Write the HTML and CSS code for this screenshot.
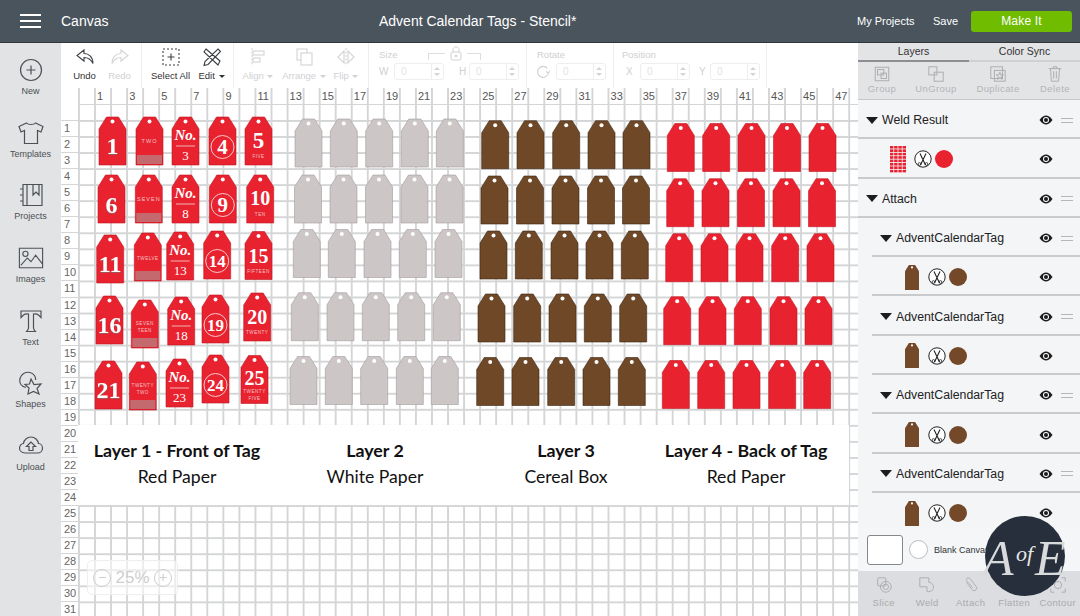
FILE: index.html
```html
<!DOCTYPE html>
<html lang="en">
	<head>
		<meta charset="utf-8">
		<title>Canvas - Advent Calendar Tags</title>
		<link rel="stylesheet" href="styles.css">
	</head>
	<body>
		<svg class="defs" aria-hidden="true">
			<defs>
				<g id="tag">
					<path d="M7.5 0H19.5L27 12V48H0V12Z"/>
					<circle class="hole" cx="13.5" cy="4.5" r="2"/>
				</g>
				<g id="scissors">
					<circle cx="9" cy="9" r="8.2" fill="#fff" stroke="#222" stroke-width="1"/>
					<path d="M6 3.5L11.5 15M12 3.5L6.5 15" fill="none" stroke="#222" stroke-width="1.1"/>
					<circle cx="5.5" cy="14" r="1.4" fill="none" stroke="#222" stroke-width=".8"/>
					<circle cx="12.5" cy="14" r="1.4" fill="none" stroke="#222" stroke-width=".8"/>
				</g>
				<g id="eye">
					<path d="M.5 5C3 1.5 5 .6 7 .6S11 1.5 13.5 5C11 8.5 9 9.4 7 9.4S3 8.5 .5 5Z" fill="#1d1d1d"/>
					<circle cx="7" cy="5" r="3" fill="#fff"/>
					<circle cx="7" cy="5" r="2" fill="#1d1d1d"/>
				</g>
				<pattern id="tiles" width="4.2" height="3.4" patternUnits="userSpaceOnUse">
					<rect width="3.4" height="2.6" fill="#e8222f"/>
				</pattern>
			</defs>
		</svg>

		<div class="app">
			<header class="topbar">
				<div class="burger"><span></span><span></span><span></span></div>
				<div class="brand">Canvas</div>
				<div class="doc-title">Advent Calendar Tags - Stencil*</div>
				<a class="top-link link-projects">My Projects</a>
				<a class="top-link link-save">Save</a>
				<a class="btn-make">Make It</a>
			</header>

			<div class="main">
				<nav class="sidebar">
					<div class="side-item">
						<svg class="side-icon" viewBox="0 0 24 24"><circle cx="12" cy="12" r="10.5"/><path d="M12 7.5v9M7.5 12h9"/></svg>
						<span>New</span>
					</div>
					<div class="side-item">
						<svg class="side-icon" viewBox="0 0 26 24"><path d="M8.5 2C10 4 16 4 17.5 2L25 5.5L23 11L19.5 9.5V22.5H6.5V9.5L3 11L1 5.5Z"/></svg>
						<span>Templates</span>
					</div>
					<div class="side-item">
						<svg class="side-icon" viewBox="0 0 26 24"><path d="M5 1.5H24V22.5H5ZM5 6H2M5 12H2M5 18H2M9 1.5V22.5M15 1.5V12L18 9L21 12V1.5"/></svg>
						<span>Projects</span>
					</div>
					<div class="side-item">
						<svg class="side-icon" viewBox="0 0 28 24"><path d="M1.5 1.5H26.5V22.5H1.5ZM3 20L10 12L14 16L19 9L26 18"/><circle cx="8" cy="7.5" r="2.8"/></svg>
						<span>Images</span>
					</div>
					<div class="side-item">
						<svg class="side-icon" viewBox="0 0 24 24"><path d="M2 2H22V8.5L19.5 6C18 4.8 16 4.8 14.5 5V19C14.5 20.5 15.5 21 16.5 22.5H7.5C8.5 21 9.5 20.5 9.5 19V5C8 4.8 6 4.8 4.5 6L2 8.5Z"/></svg>
						<span>Text</span>
					</div>
					<div class="side-item">
						<svg class="side-icon" viewBox="0 0 26 24"><path d="M8 16.5C3.5 15.5 1 12 2 7.5C3 3 7.5 .5 12 1.5C16 2.5 18 6 17.5 9M13 8L16 13.5L23 13L19 17.5L21 23L15.5 20.5L10 23L11 17L7 13.5L11.5 13Z"/></svg>
						<span>Shapes</span>
					</div>
					<div class="side-item">
						<svg class="side-icon" viewBox="0 0 26 24"><path d="M7 19C3.5 19 1.5 16.5 1.5 14C1.5 11.5 3.5 9.5 5.5 9.5C6 5.5 9.5 3 13 3C17 3 20 6 20.5 9.5C23 9.5 24.5 12 24.5 14.2C24.5 16.8 22.5 19 19.5 19Z"/><path d="M13 8L8.5 12.5H11V16.5H15V12.5H17.5Z"/></svg>
						<span>Upload</span>
					</div>
				</nav>

				<div class="workspace">
					<div class="toolbar">
						<div class="tool-group group-history">
							<div class="tool">
								<svg class="tool-icon" viewBox="0 0 20 16"><path d="M9 1L2 6.5L9 12V8.5C13 8.5 16 10.5 18 14.5C18 8 14 4.5 9 4.5Z"/></svg>
								<span>Undo</span>
							</div>
							<div class="tool is-off">
								<svg class="tool-icon" viewBox="0 0 20 16"><path d="M11 1L18 6.5L11 12V8.5C7 8.5 4 10.5 2 14.5C2 8 6 4.5 11 4.5Z"/></svg>
								<span>Redo</span>
							</div>
						</div>
						<div class="tool-group group-select">
							<div class="tool tool-wide">
								<svg class="tool-icon" viewBox="0 0 20 20"><rect x="2" y="2" width="16" height="16" stroke-dasharray="2 2"/><path d="M10 6.5v7M6.5 10h7"/></svg>
								<span>Select All</span>
							</div>
							<div class="tool tool-wide">
								<svg class="tool-icon" viewBox="0 0 20 20"><path d="M4 2L18 14L16 18L2 5ZM16 2L18.5 4.5L6 17.5L2 18.5L3 14.5Z"/></svg>
								<span>Edit <i class="caret"></i></span>
							</div>
						</div>
						<div class="tool-group group-arrange is-off">
							<div class="tool tool-align">
								<svg class="tool-icon" viewBox="0 0 20 20"><path d="M4 1V19" stroke-dasharray="2 1.5"/><rect x="5" y="4" width="11" height="4"/><rect x="5" y="11" width="7" height="4"/></svg>
								<span>Align <i class="caret"></i></span>
							</div>
							<div class="tool tool-arrange">
								<svg class="tool-icon" viewBox="0 0 20 20"><rect x="3" y="2" width="10" height="11"/><rect x="7" y="6" width="11" height="12" fill="#fff"/></svg>
								<span>Arrange <i class="caret"></i></span>
							</div>
							<div class="tool tool-flip">
								<svg class="tool-icon" viewBox="0 0 20 20"><path d="M10 1V19" stroke-dasharray="2 1.5"/><path d="M8 4L2 10L8 16ZM12 4L18 10L12 16Z"/></svg>
								<span>Flip <i class="caret"></i></span>
							</div>
						</div>
						<div class="tool-group group-size is-off">
							<div class="field-head">
								<span class="field-title">Size</span>
								<i class="bracket"></i>
								<svg class="lock" viewBox="0 0 14 16"><path d="M4 7V4.5C4 1 10 1 10 4.5V7"/><rect x="2" y="7" width="10" height="8" rx="2"/><circle cx="7" cy="11" r="1"/></svg>
								<i class="bracket bracket-right"></i>
							</div>
							<div class="field-row">
								<span class="field-key">W</span>
								<div class="field"><span>0</span><i class="stepper"></i></div>
								<span class="field-key key-h">H</span>
								<div class="field"><span>0</span><i class="stepper"></i></div>
							</div>
						</div>
						<div class="tool-group group-rotate is-off">
							<div class="field-head"><span class="field-title">Rotate</span></div>
							<div class="field-row">
								<svg class="rotate-icon" viewBox="0 0 14 14"><path d="M11.5 3.5A5.5 5.5 0 1 0 12.5 8M12.5 8L10 6.5M12.5 8L14 5.5"/></svg>
								<div class="field"><span>0</span><i class="stepper"></i></div>
							</div>
						</div>
						<div class="tool-group group-position is-off">
							<div class="field-head"><span class="field-title">Position</span></div>
							<div class="field-row">
								<span class="field-key key-x">X</span>
								<div class="field"><span>0</span><i class="stepper"></i></div>
								<span class="field-key key-y">Y</span>
								<div class="field"><span>0</span><i class="stepper"></i></div>
							</div>
						</div>
					</div>

					<div class="canvas">
						<div class="corner"></div>
						<div class="ruler-top">
							<span>1</span><span>3</span><span>5</span><span>7</span><span>9</span><span>11</span><span>13</span><span>15</span><span>17</span><span>19</span><span>21</span><span>23</span>
							<span>25</span><span>27</span><span>29</span><span>31</span><span>33</span><span>35</span><span>37</span><span>39</span><span>41</span><span>43</span><span>45</span><span>47</span>
						</div>
						<div class="ruler-left">
							<span>1</span><span>2</span><span>3</span><span>4</span><span>5</span><span>6</span><span>7</span><span>8</span><span>9</span><span>10</span><span>11</span>
							<span>12</span><span>13</span><span>14</span><span>15</span><span>16</span><span>17</span><span>18</span><span>19</span><span>20</span><span>21</span>
							<span>22</span><span>23</span><span>24</span><span>25</span><span>26</span><span>27</span><span>28</span><span>29</span><span>30</span><span>31</span>
						</div>
						<div class="grid"></div>

						<svg class="tags" viewBox="61 88 797 528">
							<!-- layer 1, front of tag -->
							<g class="red">
								<g transform="translate(99 117)"><use href="#tag"/><text class="big" x="13.5" y="37">1</text></g>
								<g transform="translate(136 117)"><use href="#tag"/><text class="word" x="13.5" y="26">TWO</text><rect class="hatch" x="1" y="38" width="25" height="9"/></g>
								<g transform="translate(172 117)"><use href="#tag"/><text class="no" x="13.5" y="23">No.</text><path class="rule" d="M4 29H23"/><text class="num" x="13.5" y="43">3</text></g>
								<g transform="translate(209 117)"><use href="#tag"/><circle class="ring" cx="13.5" cy="30" r="11.5"/><text class="num-ring solo" x="13.5" y="37">4</text></g>
								<g transform="translate(245 117)"><use href="#tag"/><text class="mid solo" x="13.5" y="31">5</text><text class="word-sm" x="13.5" y="41">FIVE</text></g>

								<g transform="translate(98 175)"><use href="#tag"/><text class="big" x="13.5" y="38">6</text></g>
								<g transform="translate(135.3 175)"><use href="#tag"/><text class="word" x="13.5" y="26">SEVEN</text><rect class="hatch" x="1" y="38" width="25" height="9"/></g>
								<g transform="translate(172 175)"><use href="#tag"/><text class="no" x="13.5" y="23">No.</text><path class="rule" d="M4 29H23"/><text class="num" x="13.5" y="43">8</text></g>
								<g transform="translate(209.3 175)"><use href="#tag"/><circle class="ring" cx="13.5" cy="30" r="11.5"/><text class="num-ring solo" x="13.5" y="37">9</text></g>
								<g transform="translate(246.7 175)"><use href="#tag"/><text class="mid" x="13.5" y="30">10</text><text class="word-sm" x="13.5" y="41">TEN</text></g>

								<g transform="translate(96.7 235)"><use href="#tag"/><text class="big" x="13.5" y="37">11</text></g>
								<g transform="translate(134.3 233)"><use href="#tag"/><text class="word-sm" x="13.5" y="27">TWELVE</text><rect class="hatch" x="1" y="38" width="25" height="9"/></g>
								<g transform="translate(166.7 232)"><use href="#tag"/><text class="no" x="13.5" y="23">No.</text><path class="rule" d="M4 29H23"/><text class="num" x="13.5" y="43">13</text></g>
								<g transform="translate(203.7 231)"><use href="#tag"/><circle class="ring" cx="13.5" cy="30" r="11.5"/><text class="num-ring" x="13.5" y="36">14</text></g>
								<g transform="translate(245 231.5)"><use href="#tag"/><text class="mid" x="13.5" y="31">15</text><text class="word-sm" x="13.5" y="41">FIFTEEN</text></g>

								<g transform="translate(96 296)"><use href="#tag"/><text class="big" x="13.5" y="37">16</text></g>
								<g transform="translate(131.3 300)"><use href="#tag"/><text class="word-sm" x="13.5" y="25">SEVEN</text><text class="word-sm" x="13.5" y="32">TEEN</text><rect class="hatch" x="1" y="38" width="25" height="9"/></g>
								<g transform="translate(167.7 297)"><use href="#tag"/><text class="no" x="13.5" y="23">No.</text><path class="rule" d="M4 29H23"/><text class="num" x="13.5" y="43">18</text></g>
								<g transform="translate(202 295)"><use href="#tag"/><circle class="ring" cx="13.5" cy="30" r="11.5"/><text class="num-ring" x="13.5" y="36">19</text></g>
								<g transform="translate(243.7 293)"><use href="#tag"/><text class="mid" x="13.5" y="31">20</text><text class="word-sm" x="13.5" y="41">TWENTY</text></g>

								<g transform="translate(95 361)"><use href="#tag"/><text class="big" x="13.5" y="37">21</text></g>
								<g transform="translate(129.3 362)"><use href="#tag"/><text class="word-sm" x="13.5" y="25">TWENTY</text><text class="word-sm" x="13.5" y="32">TWO</text><rect class="hatch" x="1" y="38" width="25" height="9"/></g>
								<g transform="translate(166 359)"><use href="#tag"/><text class="no" x="13.5" y="23">No.</text><path class="rule" d="M4 29H23"/><text class="num" x="13.5" y="43">23</text></g>
								<g transform="translate(202 355)"><use href="#tag"/><circle class="ring" cx="13.5" cy="30" r="11.5"/><text class="num-ring" x="13.5" y="36">24</text></g>
								<g transform="translate(241 355.5)"><use href="#tag"/><text class="mid" x="13.5" y="29">25</text><text class="word-sm" x="13.5" y="37">TWENTY</text><text class="word-sm" x="13.5" y="44">FIVE</text></g>
							</g>

							<!-- layer 2, white paper -->
							<g class="grey">
								<use href="#tag" x="295" y="119"/><use href="#tag" x="330.3" y="119"/><use href="#tag" x="365.7" y="119"/><use href="#tag" x="401.3" y="119"/><use href="#tag" x="436.3" y="119"/>
								<use href="#tag" x="294.5" y="175"/><use href="#tag" x="330" y="175"/><use href="#tag" x="365.5" y="175"/><use href="#tag" x="401" y="175"/><use href="#tag" x="436" y="175"/>
								<use href="#tag" x="293.3" y="229.5"/><use href="#tag" x="328.3" y="229.5"/><use href="#tag" x="364" y="229.5"/><use href="#tag" x="399.3" y="229.5"/><use href="#tag" x="435" y="229.5"/>
								<use href="#tag" x="291.3" y="292.7"/><use href="#tag" x="327" y="292.7"/><use href="#tag" x="362.3" y="292.7"/><use href="#tag" x="397.7" y="292.7"/><use href="#tag" x="433.3" y="292.7"/>
								<use href="#tag" x="290" y="356.5"/><use href="#tag" x="325.3" y="356.5"/><use href="#tag" x="360.7" y="356.5"/><use href="#tag" x="396.3" y="356.5"/><use href="#tag" x="431.3" y="356.5"/>
							</g>

							<!-- layer 3, cereal box -->
							<g class="brown">
								<use href="#tag" x="481.7" y="120.7"/><use href="#tag" x="517" y="120.7"/><use href="#tag" x="552.7" y="120.7"/><use href="#tag" x="588" y="120.7"/><use href="#tag" x="623" y="120.7"/>
								<use href="#tag" x="481" y="176"/><use href="#tag" x="516.5" y="176"/><use href="#tag" x="552" y="176"/><use href="#tag" x="587.5" y="176"/><use href="#tag" x="622.5" y="176"/>
								<use href="#tag" x="480" y="231"/><use href="#tag" x="515.3" y="231"/><use href="#tag" x="551" y="231"/><use href="#tag" x="586" y="231"/><use href="#tag" x="621.3" y="231"/>
								<use href="#tag" x="478" y="294"/><use href="#tag" x="513.7" y="294"/><use href="#tag" x="549" y="294"/><use href="#tag" x="584.3" y="294"/><use href="#tag" x="619.7" y="294"/>
								<use href="#tag" x="476.7" y="357.5"/><use href="#tag" x="512" y="357.5"/><use href="#tag" x="547.7" y="357.5"/><use href="#tag" x="583" y="357.5"/><use href="#tag" x="618.3" y="357.5"/>
							</g>

							<!-- layer 4, back of tag -->
							<g class="red">
								<use href="#tag" x="667.3" y="123.5"/><use href="#tag" x="702.7" y="123.5"/><use href="#tag" x="738" y="123.5"/><use href="#tag" x="773.5" y="123.5"/><use href="#tag" x="809" y="123.5"/>
								<use href="#tag" x="666.7" y="178.7"/><use href="#tag" x="702" y="178.7"/><use href="#tag" x="737.5" y="178.7"/><use href="#tag" x="773" y="178.7"/><use href="#tag" x="808.5" y="178.7"/>
								<use href="#tag" x="665.7" y="233.7"/><use href="#tag" x="701" y="233.7"/><use href="#tag" x="736" y="233.7"/><use href="#tag" x="771.7" y="233.7"/><use href="#tag" x="807" y="233.7"/>
								<use href="#tag" x="663.7" y="296.7"/><use href="#tag" x="699" y="296.7"/><use href="#tag" x="734.3" y="296.7"/><use href="#tag" x="770" y="296.7"/><use href="#tag" x="805" y="296.7"/>
								<use href="#tag" x="662.3" y="360.5"/><use href="#tag" x="697.7" y="360.5"/><use href="#tag" x="733" y="360.5"/><use href="#tag" x="768.7" y="360.5"/><use href="#tag" x="803.7" y="360.5"/>
							</g>
						</svg>

						<div class="notes">
							<div class="note"><b>Layer 1 - Front of Tag</b><span>Red Paper</span></div>
							<div class="note"><b>Layer 2</b><span>White Paper</span></div>
							<div class="note"><b>Layer 3</b><span>Cereal Box</span></div>
							<div class="note"><b>Layer 4 - Back of Tag</b><span>Red Paper</span></div>
						</div>

						<div class="zoom-box">
							<i class="zoom-btn">&minus;</i>
							<span>25%</span>
							<i class="zoom-btn">+</i>
						</div>
					</div>
				</div>

				<aside class="panel">
					<div class="tabs">
						<div class="tab tab-on">Layers</div>
						<div class="tab">Color Sync</div>
					</div>
					<div class="layer-tools">
						<div class="layer-tool tool-group-btn">
							<svg viewBox="0 0 20 20"><rect x="2.5" y="2.5" width="15" height="15"/><rect x="5" y="5" width="7" height="6"/><rect x="9" y="9" width="6" height="6"/></svg>
							<span>Group</span>
						</div>
						<div class="layer-tool tool-ungroup-btn">
							<svg viewBox="0 0 20 20"><rect x="2" y="2" width="9" height="9"/><rect x="8" y="8" width="10" height="10"/></svg>
							<span>UnGroup</span>
						</div>
						<div class="layer-tool tool-duplicate-btn">
							<svg viewBox="0 0 20 20"><rect x="2" y="2" width="13" height="13"/><rect x="6" y="6" width="12" height="12"/><path d="M12 8L13 11H16L13.5 13L14.5 16L12 14L9.5 16L10.5 13L8 11H11Z"/></svg>
							<span>Duplicate</span>
						</div>
						<div class="layer-tool tool-delete-btn">
							<svg viewBox="0 0 20 20"><path d="M3 4H17M8 4V2H12V4M5 4L6 18H14L15 4M8.5 7V15M11.5 7V15"/></svg>
							<span>Delete</span>
						</div>
					</div>

					<div class="layers">
						<div class="layer layer-head">
							<i class="arrow"></i><span class="layer-name">Weld Result</span>
							<svg class="eye" viewBox="0 0 14 10"><use href="#eye"/></svg><i class="handle"></i>
						</div>
						<div class="layer layer-thumb thumb-weld">
							<svg class="thumb-grid" viewBox="0 0 16 27"><rect width="16" height="27" fill="url(#tiles)"/></svg>
							<svg class="cut" viewBox="0 0 18 18"><use href="#scissors"/></svg>
							<i class="dot dot-red"></i>
							<svg class="eye eye-only" viewBox="0 0 14 10"><use href="#eye"/></svg>
						</div>
						<div class="layer layer-head">
							<i class="arrow"></i><span class="layer-name">Attach</span>
							<svg class="eye" viewBox="0 0 14 10"><use href="#eye"/></svg><i class="handle"></i>
						</div>

						<div class="layer layer-head layer-sub">
							<i class="arrow"></i><span class="layer-name">AdventCalendarTag</span>
							<svg class="eye" viewBox="0 0 14 10"><use href="#eye"/></svg><i class="handle"></i>
						</div>
						<div class="layer layer-thumb layer-sub">
							<svg class="thumb-tag" viewBox="0 0 27 48"><use href="#tag"/></svg>
							<svg class="cut" viewBox="0 0 18 18"><use href="#scissors"/></svg>
							<i class="dot"></i>
							<svg class="eye eye-only" viewBox="0 0 14 10"><use href="#eye"/></svg>
						</div>
						<div class="layer layer-head layer-sub">
							<i class="arrow"></i><span class="layer-name">AdventCalendarTag</span>
							<svg class="eye" viewBox="0 0 14 10"><use href="#eye"/></svg><i class="handle"></i>
						</div>
						<div class="layer layer-thumb layer-sub">
							<svg class="thumb-tag" viewBox="0 0 27 48"><use href="#tag"/></svg>
							<svg class="cut" viewBox="0 0 18 18"><use href="#scissors"/></svg>
							<i class="dot"></i>
							<svg class="eye eye-only" viewBox="0 0 14 10"><use href="#eye"/></svg>
						</div>
						<div class="layer layer-head layer-sub">
							<i class="arrow"></i><span class="layer-name">AdventCalendarTag</span>
							<svg class="eye" viewBox="0 0 14 10"><use href="#eye"/></svg><i class="handle"></i>
						</div>
						<div class="layer layer-thumb layer-sub">
							<svg class="thumb-tag" viewBox="0 0 27 48"><use href="#tag"/></svg>
							<svg class="cut" viewBox="0 0 18 18"><use href="#scissors"/></svg>
							<i class="dot"></i>
							<svg class="eye eye-only" viewBox="0 0 14 10"><use href="#eye"/></svg>
						</div>
						<div class="layer layer-head layer-sub">
							<i class="arrow"></i><span class="layer-name">AdventCalendarTag</span>
							<svg class="eye" viewBox="0 0 14 10"><use href="#eye"/></svg><i class="handle"></i>
						</div>
						<div class="layer layer-thumb layer-sub">
							<svg class="thumb-tag" viewBox="0 0 27 48"><use href="#tag"/></svg>
							<svg class="cut" viewBox="0 0 18 18"><use href="#scissors"/></svg>
							<i class="dot"></i>
							<svg class="eye eye-only" viewBox="0 0 14 10"><use href="#eye"/></svg>
						</div>
					</div>

					<div class="blank-row">
						<i class="swatch"></i>
						<i class="swatch-round"></i>
						<span>Blank Canvas</span>
					</div>

					<div class="actions">
						<div class="action">
							<svg viewBox="0 0 20 20"><rect x="3" y="2" width="9" height="9" rx="1"/><circle cx="12" cy="12" r="6"/><circle cx="12" cy="12" r="3"/></svg>
							<span>Slice</span>
						</div>
						<div class="action">
							<svg viewBox="0 0 20 20"><path d="M2 2H12V7C15 7 18 10 17 14C16 17 12 18 10 17V12H2Z"/></svg>
							<span>Weld</span>
						</div>
						<div class="action">
							<svg viewBox="0 0 20 20"><path d="M5 7L11 15C13 18 18 15 16 12L9 3C7 1 4 3 5 5L12 13"/></svg>
							<span>Attach</span>
						</div>
						<div class="action">
							<svg viewBox="0 0 20 20"><rect x="3" y="3" width="14" height="14"/></svg>
							<span>Flatten</span>
						</div>
						<div class="action">
							<svg viewBox="0 0 20 20"><path d="M2 6V2H6M14 2H18V6M18 14V18H14M6 18H2V14"/><circle cx="10" cy="10" r="4"/></svg>
							<span>Contour</span>
						</div>
					</div>
				</aside>
			</div>

			<svg class="logo" viewBox="0 0 90 82">
				<circle cx="45" cy="41" r="40" fill="#262f3b"/>
				<text class="logo-big" x="3" y="60">A</text>
				<text class="logo-of" x="36" y="46">of</text>
				<text class="logo-big" x="55" y="60">E</text>
			</svg>
		</div>
	</body>
</html>
```

FILE: styles.css
```css
* {
	box-sizing: border-box;
}
html, body {
	margin: 0;
	padding: 0;
}
body {
	font-family: "Liberation Sans", Arial, sans-serif;
	color: #333;
	background: #fff;
}
i {
	font-style: normal;
}
.defs {
	position: absolute;
	width: 0;
	height: 0;
}
.app {
	position: relative;
	display: flex;
	flex-direction: column;
	width: 1080px;
	height: 616px;
	overflow: hidden;
}

/* top bar */
.topbar {
	display: flex;
	align-items: center;
	flex: none;
	height: 43px;
	padding-left: 20px;
	color: #fff;
	background: #4a545d;
	border-bottom: 1px solid #2f373e;
}
.burger {
	display: flex;
	flex-direction: column;
	gap: 4px;
	width: 21px;
}
.burger span {
	height: 2px;
	background: #fff;
}
.brand {
	width: 318px;
	margin-left: 20px;
	font-size: 14px;
}
.doc-title {
	width: 478px;
	font-size: 14px;
}
.top-link {
	font-size: 11px;
}
.link-projects {
	width: 76px;
}
.link-save {
	width: 38px;
}
.btn-make {
	width: 101px;
	height: 21px;
	font-size: 12px;
	line-height: 21px;
	letter-spacing: .2px;
	text-align: center;
	background: #6fbc00;
	border-radius: 3px;
}

.main {
	display: flex;
	flex: 1;
	min-height: 0;
}

/* left nav */
.sidebar {
	flex: none;
	width: 61px;
	padding-top: 15px;
	background: #e1e3e5;
}
.side-item {
	display: flex;
	flex-direction: column;
	align-items: center;
	height: 62.7px;
	font-size: 9px;
	color: #4d4f52;
}
.side-item span {
	margin-top: 3px;
	line-height: 12px;
}
.side-icon {
	width: 26px;
	height: 24px;
	fill: none;
	stroke: #4d5156;
	stroke-width: 1.2;
}

/* toolbar */
.workspace {
	display: flex;
	flex-direction: column;
	flex: none;
	width: 797px;
}
.toolbar {
	display: flex;
	flex: none;
	height: 45px;
	background: #fff;
}
.tool-group {
	display: flex;
	height: 45px;
	border-right: 1px solid #eeeeef;
}
.group-history {
	width: 81px;
	padding-left: 6px;
}
.group-select {
	width: 92px;
	padding-left: 8px;
}
.group-arrange {
	width: 135px;
}
.group-size,
.group-rotate,
.group-position {
	flex-direction: column;
	padding: 4px 0 0 10px;
}
.group-size {
	width: 158px;
}
.group-rotate {
	width: 87px;
}
.group-position {
	width: 153px;
	padding-left: 8px;
}
.tool {
	display: flex;
	flex-direction: column;
	align-items: center;
	width: 35px;
	padding-top: 4px;
	font-size: 9.5px;
	white-space: nowrap;
}
.tool-wide {
	width: 41px;
}
.tool-align {
	width: 48px;
}
.tool-arrange {
	width: 44px;
}
.tool-flip {
	width: 40px;
}
.tool span {
	margin-top: 3px;
	line-height: 12px;
}
.tool-icon {
	width: 20px;
	height: 20px;
	fill: none;
	stroke: #3d4043;
	stroke-width: 1.1;
}
.caret {
	display: inline-block;
	width: 0;
	height: 0;
	margin-left: 1px;
	vertical-align: middle;
	border-top: 3px solid currentColor;
	border-right: 3px solid transparent;
	border-left: 3px solid transparent;
}
.is-off .tool-icon,
.tool.is-off .tool-icon {
	stroke: #d3d4d6;
}
.is-off {
	color: #cfd0d2;
}
.field-head {
	display: flex;
	align-items: center;
	height: 15px;
	font-size: 9.5px;
}
.field-title {
	width: 49px;
	white-space: nowrap;
}
.bracket {
	width: 17px;
	height: 7px;
	margin-top: 4px;
	border-top: 1px solid #dcdddf;
	border-left: 1px solid #dcdddf;
}
.bracket-right {
	width: 14px;
	border-left: 0;
	border-right: 1px solid #dcdddf;
}
.lock {
	width: 14px;
	height: 16px;
	margin: -4px 4px 0;
	fill: none;
	stroke: #cfd0d2;
	stroke-width: 1;
}
.field-row {
	display: flex;
	align-items: center;
	margin-top: 1px;
	font-size: 10px;
}
.field-key {
	width: 15px;
}
.key-h {
	width: 25px;
	padding-left: 15px;
}
.key-x {
	width: 18px;
	padding-left: 4px;
}
.key-y {
	width: 20px;
	padding-left: 9px;
}
.field {
	position: relative;
	width: 50px;
	height: 17px;
	padding-left: 6px;
	font-size: 10px;
	line-height: 16px;
	color: #e2e3e4;
	border: 1px solid #eeeeef;
	border-radius: 3px;
}
.stepper {
	position: absolute;
	top: 0;
	right: 0;
	bottom: 0;
	width: 12px;
	border-left: 1px solid #eeeeef;
}
.stepper::before,
.stepper::after {
	content: "";
	position: absolute;
	left: 2px;
	border-right: 3px solid transparent;
	border-left: 3px solid transparent;
}
.stepper::before {
	top: 3px;
	border-bottom: 3px solid #d3d4d6;
}
.stepper::after {
	bottom: 3px;
	border-top: 3px solid #d3d4d6;
}
.rotate-icon {
	width: 14px;
	height: 14px;
	margin: 0 6px 0 -1px;
	fill: none;
	stroke: #cfd0d2;
	stroke-width: 1.1;
}

/* canvas */
.canvas {
	position: relative;
	display: grid;
	grid-template-columns: 17px 1fr;
	grid-template-rows: 32px 1fr;
	flex: 1;
	min-height: 0;
	overflow: hidden;
	background: #fff;
}
.corner {
	background: #fff;
}
.ruler-top {
	display: flex;
	padding-left: 16.05px;
	background:
		linear-gradient(#d4d5d6 1.5px, transparent 1.5px) 0 16px / 100% 100% no-repeat,
		linear-gradient(90deg, #d4d5d6 1.5px, transparent 1.5px) 0 0 / 16.05px 100%;
}
.ruler-top span {
	flex: none;
	width: 32.1px;
	height: 16px;
	padding-left: 3px;
	font-size: 11px;
	line-height: 17px;
	color: #555;
}
.ruler-left {
	display: flex;
	flex-direction: column;
}
.ruler-left span {
	flex: none;
	height: 16.05px;
	padding-left: 3px;
	font-size: 11px;
	line-height: 14px;
	color: #666;
	border-top: 1.5px solid #d4d5d6;
}
.grid {
	background-image:
		linear-gradient(#d4d5d6 1.5px, transparent 1.5px),
		linear-gradient(90deg, #d4d5d6 1.5px, transparent 1.5px);
	background-size: 16.05px 16.05px;
}
.tags {
	position: absolute;
	top: 0;
	left: 0;
	width: 797px;
	height: 528px;
}
.red {
	fill: #e8222f;
	stroke: #c11823;
	stroke-width: .6;
}
.grey {
	fill: #cdc6c6;
	stroke: #a29b9b;
	stroke-width: .6;
}
.brown {
	fill: #6f4828;
	stroke: #3b2513;
	stroke-width: .6;
}
.hole {
	fill: #fff;
	stroke: none;
}
.tags text {
	text-anchor: middle;
	stroke: none;
	fill: #fff;
}
.tags .big {
	font: bold 24px "Liberation Serif", serif;
	filter: drop-shadow(0 1px 0 #9d5a5e);
}
.tags .mid {
	font: bold 20px "Liberation Serif", serif;
}
.tags .mid.solo {
	font-size: 23px;
}
.tags .word {
	font: 5.5px "Liberation Sans", sans-serif;
	letter-spacing: 1px;
	fill: #f4c3c5;
}
.tags .word-sm {
	font: 4.6px "Liberation Sans", sans-serif;
	letter-spacing: .5px;
	fill: #f4c3c5;
}
.tags .no {
	font: italic bold 15px "Liberation Serif", serif;
}
.tags .num {
	font: 13px "Liberation Serif", serif;
}
.tags .num-ring {
	font: bold 17px "Liberation Serif", serif;
}
.tags .num-ring.solo {
	font-size: 21px;
}
.rule {
	fill: none;
	stroke: #f2b5b8;
	stroke-width: 1;
}
.ring {
	fill: none;
	stroke: #f6c9cb;
	stroke-width: 1;
}
.hatch {
	fill: #c4696e;
	stroke: none;
}
.notes {
	position: absolute;
	top: 337px;
	left: 17px;
	display: grid;
	grid-template-columns: 198px 198px 184px 176px;
	width: 771px;
	height: 80px;
	padding-top: 13px;
	font-family: Lato, sans-serif;
	color: #111;
	text-align: center;
	background: #fff;
}
.note b,
.note span {
	display: block;
	white-space: nowrap;
}
.note b {
	font-size: 17.8px;
	line-height: 24px;
}
.note span {
	margin-top: 3px;
	font-size: 17.6px;
	line-height: 24px;
}
.zoom-box {
	position: absolute;
	top: 472px;
	left: 26px;
	display: flex;
	align-items: center;
	justify-content: space-between;
	width: 91px;
	height: 35px;
	padding: 0 5px;
	font-size: 17px;
	color: #cdcecf;
	background: rgba(255, 255, 255, .55);
	border: 1px solid #eeeeef;
	border-radius: 5px;
}
.zoom-btn {
	width: 18px;
	height: 18px;
	font-size: 14px;
	line-height: 15px;
	text-align: center;
	border: 1px solid #cdcecf;
	border-radius: 50%;
}

/* right panel */
.panel {
	display: flex;
	flex-direction: column;
	flex: none;
	width: 222px;
	background: #f4f5f7;
}
.tabs {
	display: flex;
	flex: none;
	height: 19px;
	font-size: 10.5px;
	line-height: 17px;
	text-align: center;
	background: #e3e4e6;
}
.tab {
	flex: 1;
	border-bottom: 2px solid #cfd0d2;
}
.tab-on {
	border-bottom-color: #8c8e92;
}
.layer-tools {
	position: relative;
	display: flex;
	flex: none;
	height: 38px;
	padding-top: 3px;
	background: #e3e4e6;
	border-bottom: 1px solid #c6c7c9;
}
.layer-tool {
	display: flex;
	flex-direction: column;
	align-items: center;
	font-size: 9.5px;
	letter-spacing: .4px;
	color: #b4b5b7;
}
.tool-group-btn {
	width: 48px;
}
.tool-ungroup-btn {
	width: 60px;
}
.tool-duplicate-btn {
	width: 64px;
}
.tool-delete-btn {
	width: 50px;
}
.layer-tool svg,
.action svg {
	width: 18px;
	height: 18px;
	fill: none;
	stroke: #adaeb0;
	stroke-width: 1.1;
}
.layers {
	flex: 1;
	min-height: 0;
	overflow: hidden;
}
.layer {
	display: flex;
	align-items: center;
	height: 39.3px;
	padding-top: 3px;
	border-bottom: 2px solid #c9cacc;
}
.layer-head {
	padding-right: 7px;
	padding-left: 8px;
}
.layer-head.layer-sub {
	margin-left: 14px;
	padding-left: 8px;
}
.layer-thumb {
	padding-right: 7px;
}
.thumb-weld {
	padding-left: 32px;
}
.layer-thumb.layer-sub {
	margin-left: 14px;
	padding-left: 33px;
}
.arrow {
	width: 0;
	height: 0;
	margin-right: 4px;
	border-top: 7px solid #1d1d1d;
	border-right: 6px solid transparent;
	border-left: 6px solid transparent;
}
.layer-name {
	font-size: 12.3px;
	color: #222;
}
.eye {
	width: 14px;
	height: 10px;
	margin-left: auto;
}
.handle {
	width: 12px;
	height: 5px;
	margin-left: 8px;
	border-top: 1px solid #b5b6b8;
	border-bottom: 1px solid #b5b6b8;
}
.eye-only {
	margin-right: 20px;
}
.thumb-grid {
	width: 16px;
	height: 27px;
}
.thumb-tag {
	width: 14px;
	height: 25px;
	fill: #74492a;
}
.thumb-tag .hole,
.thumb-tag use {
	stroke: none;
}
.cut {
	width: 18px;
	height: 18px;
	margin-left: 9px;
}
.thumb-weld .cut {
	margin-left: 8px;
}
.dot {
	width: 18px;
	height: 18px;
	margin-left: 2.5px;
	background: #74492a;
	border-radius: 50%;
}
.dot-red {
	background: #e8222f;
}
.blank-row {
	display: flex;
	align-items: center;
	flex: none;
	height: 43px;
	padding-left: 9px;
	font-size: 9px;
	color: #333;
	background: #f5f6f8;
}
.swatch {
	width: 36px;
	height: 30px;
	background: #fff;
	border: 1px solid #85878a;
	border-radius: 3px;
}
.swatch-round {
	width: 19px;
	height: 19px;
	margin: 0 6px;
	background: #fff;
	border: 1px solid #bdbec0;
	border-radius: 50%;
}
.actions {
	display: flex;
	flex: none;
	height: 45px;
	padding: 5px 0 0 4px;
	background: #dcdde0;
}
.action {
	display: flex;
	flex-direction: column;
	align-items: center;
	width: 43.5px;
	font-size: 9.5px;
	letter-spacing: .4px;
	color: #a9aaac;
}
.action span {
	margin-top: 3px;
}

/* watermark */
.logo {
	position: absolute;
	top: 515px;
	left: 980px;
	width: 90px;
	height: 82px;
	overflow: visible;
}
.logo-big {
	font: italic 50px "Liberation Serif", serif;
	fill: #d9dadb;
}
.logo-of {
	font: italic 22px "Liberation Serif", serif;
	fill: #e8e8e8;
}
```
